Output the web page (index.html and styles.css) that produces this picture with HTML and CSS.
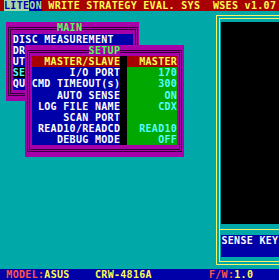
FILE: index.html
```html
<!DOCTYPE html>
<html lang="en">

<head>
    <meta charset="UTF-8">
    <meta name="viewport" content="width=device-width, initial-scale=1.0">
    <title>WSES v1.07</title>
    <link rel="stylesheet" href="styles.css">
</head>

<body>
    <div class="screen">
        <div class="titlebar"><span class="logo-lite">LITE</span><span class="logo-on">ON</span> WRITE STRATEGY EVAL. SYS  WSES v1.07</div>

        <div class="window main-win">
            <div class="window-frame">
                <div class="window-title main-title"><span>MAIN</span></div>
                <div class="menu-item">DISC MEASUREMENT</div>
                <div class="menu-item">DR</div>
                <div class="menu-item">UT</div>
                <div class="menu-item active">SE</div>
                <div class="menu-item">QU</div>
            </div>
        </div>

        <div class="window setup-win">
            <div class="window-frame">
                <div class="window-title"><span>SETUP</span></div>
                <div class="setup-row selected">
                    <div class="label">MASTER/SLAVE</div>
                    <div class="sep"></div>
                    <div class="value">MASTER</div>
                </div>
                <div class="setup-row">
                    <div class="label">I/O PORT</div>
                    <div class="sep"></div>
                    <div class="value">170</div>
                </div>
                <div class="setup-row">
                    <div class="label">CMD TIMEOUT(s)</div>
                    <div class="sep"></div>
                    <div class="value">300</div>
                </div>
                <div class="setup-row">
                    <div class="label">AUTO SENSE</div>
                    <div class="sep"></div>
                    <div class="value">ON</div>
                </div>
                <div class="setup-row">
                    <div class="label">LOG FILE NAME</div>
                    <div class="sep"></div>
                    <div class="value">CDX</div>
                </div>
                <div class="setup-row">
                    <div class="label">SCAN PORT</div>
                    <div class="sep"></div>
                    <div class="value"></div>
                </div>
                <div class="setup-row">
                    <div class="label">READ10/READCD</div>
                    <div class="sep"></div>
                    <div class="value">READ10</div>
                </div>
                <div class="setup-row">
                    <div class="label">DEBUG MODE</div>
                    <div class="sep"></div>
                    <div class="value">OFF</div>
                </div>
            </div>
        </div>

        <div class="sense-panel">
            <div class="sense-view"></div>
            <div class="sense-divider"></div>
            <div class="sense-key">SENSE KEY</div>
        </div>

        <div class="statusbar"> <span class="key">MODEL:</span>ASUS    CRW-4816A         <span class="key">F/W:</span>1.0</div>
    </div>
</body>

</html>
```

FILE: styles.css
```css
* {
    margin: 0;
    padding: 0;
    box-sizing: border-box;
}

body {
    background: #00a8a8;
    font-family: "DejaVu Sans Mono", "Liberation Mono", monospace;
    font-weight: bold;
    font-size: 10px;
    line-height: 11.2px;
    letter-spacing: 0.31px;
    color: #fcfcfc;
}

/* 80x25 text screen, one cell = 6.33 x 11.2 */
.screen {
    display: grid;
    grid-template-columns: repeat(45, 6.33px);
    grid-template-rows: repeat(25, 11.2px);
    width: 279px;
    height: 280px;
    overflow: hidden;
}

.titlebar {
    grid-column: 1 / -1;
    grid-row: 1;
    padding-left: 4px;
    background: #a80000;
    color: #fcfc54;
    white-space: pre;
}

.logo-lite {
    background: #a8d8a8;
    color: #0000a8;
}

.logo-on {
    background: #0000a8;
    color: #a8d8a8;
}

.window {
    background: #a800a8;
    padding: 4.9px 1.4px;
}

.window-frame {
    height: 100%;
    border: 3px double #36003c;
    padding: 3.3px 1.93px;
}

.window-title {
    display: flex;
    justify-content: center;
    height: 11.2px;
    margin-top: -11.2px;
    color: #54fc54;
    white-space: pre;
}

.window-title span {
    background: #a800a8;
}

.main-title span {
    margin-right: 6.33px;
}

.main-win {
    grid-column: 2 / 23;
    grid-row: 3 / 10;
}

.menu-item {
    background: #0000a8;
    white-space: pre;
}

.menu-item.active {
    background: #000;
    color: #54fcfc;
}

.setup-win {
    grid-column: 5 / 30;
    grid-row: 5 / 15;
}

.setup-row {
    display: grid;
    grid-template-columns: 88.62px 6.33px 50.64px;
    height: 11.2px;
}

.label {
    background: #0000a8;
    text-align: right;
    white-space: pre;
}

.sep {
    background: #000;
}

.value {
    background: #00a800;
    color: #54fcfc;
    text-align: right;
    white-space: pre;
}

.setup-row.selected .label,
.setup-row.selected .value {
    background: #a80000;
    color: #fcfc54;
}

.sense-panel {
    grid-column: 35 / -1;
    grid-row: 2 / 25;
    display: flex;
    flex-direction: column;
    margin: 4px 0 3.3px 1px;
    border: 4px double #f4f464;
    padding: 3.2px 0 3.9px 1.3px;
}

.sense-view {
    height: 201.6px;
    background: #000;
}

.sense-divider {
    height: 11.2px;
    margin-left: -1.3px;
    background: linear-gradient(#f4f464, #f4f464) 0 5.5px / 100% 1px no-repeat;
}

.sense-key {
    height: 22.4px;
    background: #0000a8;
    white-space: pre;
}

.statusbar {
    grid-column: 1 / -1;
    grid-row: 25;
    background: #0000a8;
    color: #fcfc54;
    white-space: pre;
}

.statusbar .key {
    color: #fc5454;
}
```
